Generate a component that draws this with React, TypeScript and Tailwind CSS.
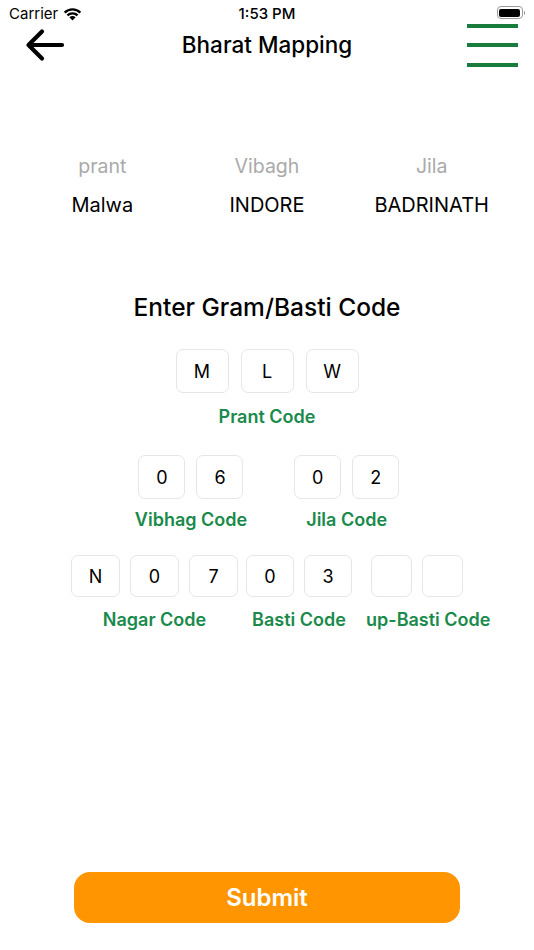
import React from "react";

const FONT = { fontFamily: "Inter, 'Noto Sans', sans-serif" };

function CodeBox({ value, w, h }: { value: string; w: string; h: string }) {
  return (
    <div
      className={`${w} ${h} flex items-center justify-center rounded-[7px] border border-[#e6e6e6] bg-white text-[18px] text-black`}
    >
      {value}
    </div>
  );
}

function Label({ children }: { children: React.ReactNode }) {
  return <div className="text-[18px] font-semibold leading-[24px] text-[#198a4b] whitespace-nowrap">{children}</div>;
}

function StatusBar() {
  return (
    <div className="relative flex h-[22px] items-start justify-between px-[9px] text-[15px] text-black">
      <div className="flex items-center gap-[5px] pt-[4px] leading-[20px]">
        <span>Carrier</span>
        <svg width="19" height="14" viewBox="0 0 19 14">
          <path d="M9.5 13.5 L6.4 10.2 A4.4 4.4 0 0 1 12.6 10.2 Z" fill="#000" />
          <path d="M3.6 7.6 A8.3 8.3 0 0 1 15.4 7.6 L13.7 9.3 A5.9 5.9 0 0 0 5.3 9.3 Z" fill="#000" />
          <path d="M0.8 4.8 A12.2 12.2 0 0 1 18.2 4.8 L16.5 6.5 A9.8 9.8 0 0 0 2.5 6.5 Z" fill="#000" />
        </svg>
      </div>
      <div className="absolute left-1/2 top-[4px] -translate-x-1/2 text-[15px] font-medium leading-[20px]">1:53 PM</div>
      <div className="flex items-center pt-[6px]">
        <div className="flex h-[13px] w-[26px] items-center rounded-[4px] border border-[#9a9a9a] p-[1.5px]">
          <div className="h-full w-full rounded-[2px] bg-black" />
        </div>
        <div className="ml-[1px] h-[4px] w-[1.5px] rounded-r-sm bg-[#9a9a9a]" />
      </div>
    </div>
  );
}

export default function App() {
  return (
    <div className="flex min-h-screen flex-col bg-white" style={FONT}>
      <StatusBar />

      {/* header */}
      <div className="relative flex h-[46px] items-center justify-between pl-[26px] pr-[16px]">
        <svg width="40" height="34" viewBox="0 0 40 34" className="-ml-[1px]">
          <path
            d="M37 17 H4 M17 3.5 L3.5 17 L17 30.5"
            fill="none"
            stroke="#000"
            strokeWidth="4.2"
            strokeLinecap="round"
            strokeLinejoin="round"
          />
        </svg>
        <div className="absolute left-1/2 -translate-x-1/2 text-[22.5px] font-medium text-black">Bharat Mapping</div>
        <div className="flex w-[51px] flex-col gap-[15.5px]">
          <div className="h-[4px] bg-[#177c3c]" />
          <div className="h-[4px] bg-[#177c3c]" />
          <div className="h-[4px] bg-[#177c3c]" />
        </div>
      </div>

      {/* prant / vibagh / jila */}
      <div className="mt-[86px] grid grid-cols-3 px-[20px] text-center">
        {[
          ["prant", "Malwa"],
          ["Vibagh", "INDORE"],
          ["Jila", "BADRINATH"],
        ].map(([k, v]) => (
          <div key={k} className="flex flex-col items-center gap-[15px]">
            <div className="text-[19.5px] leading-[24px] text-[#aaaaaa]">{k}</div>
            <div className="text-[20px] leading-[24px] text-black">{v}</div>
          </div>
        ))}
      </div>

      <div className="mt-[75px] text-center text-[24.5px] font-medium leading-[30px] text-black">Enter Gram/Basti Code</div>

      {/* prant code */}
      <div className="mt-[27px] flex flex-col items-center gap-[12px]">
        <div className="flex gap-[12px]">
          <CodeBox value="M" w="w-[53px]" h="h-[44px]" />
          <CodeBox value="L" w="w-[53px]" h="h-[44px]" />
          <CodeBox value="W" w="w-[53px]" h="h-[44px]" />
        </div>
        <Label>Prant Code</Label>
      </div>

      {/* vibhag / jila */}
      <div className="mt-[26px] flex justify-center gap-[47px]">
        <div className="flex flex-col items-center gap-[9px]">
          <div className="flex gap-[11px]">
            <CodeBox value="0" w="w-[47px]" h="h-[44px]" />
            <CodeBox value="6" w="w-[47px]" h="h-[44px]" />
          </div>
          <Label>Vibhag Code</Label>
        </div>
        <div className="flex flex-col items-center gap-[9px]">
          <div className="flex gap-[11px]">
            <CodeBox value="0" w="w-[47px]" h="h-[44px]" />
            <CodeBox value="2" w="w-[47px]" h="h-[44px]" />
          </div>
          <Label>Jila Code</Label>
        </div>
      </div>

      {/* nagar / basti / up-basti */}
      <div className="mt-[23px] flex pl-[71px]">
        <div className="flex flex-col items-center gap-[11px]">
          <div className="flex gap-[10px]">
            <CodeBox value="N" w="w-[49px]" h="h-[42px]" />
            <CodeBox value="0" w="w-[49px]" h="h-[42px]" />
            <CodeBox value="7" w="w-[49px]" h="h-[42px]" />
          </div>
          <Label>Nagar Code</Label>
        </div>
        <div className="ml-[8px] flex flex-col items-center gap-[11px]">
          <div className="flex gap-[10px]">
            <CodeBox value="0" w="w-[48px]" h="h-[42px]" />
            <CodeBox value="3" w="w-[48px]" h="h-[42px]" />
          </div>
          <Label>Basti Code</Label>
        </div>
        <div className="ml-[14px] flex flex-col items-start gap-[11px]">
          <div className="ml-[5px] flex gap-[10px]">
            <CodeBox value="" w="w-[41px]" h="h-[42px]" />
            <CodeBox value="" w="w-[41px]" h="h-[42px]" />
          </div>
          <Label>up-Basti Code</Label>
        </div>
      </div>

      <div className="flex-1" />

      <div className="flex justify-center pb-[27px]">
        <button className="flex h-[51px] w-[386px] items-center justify-center rounded-[16px] bg-[#ff9500] text-[24px] font-semibold text-white">
          Submit
        </button>
      </div>
    </div>
  );
}
